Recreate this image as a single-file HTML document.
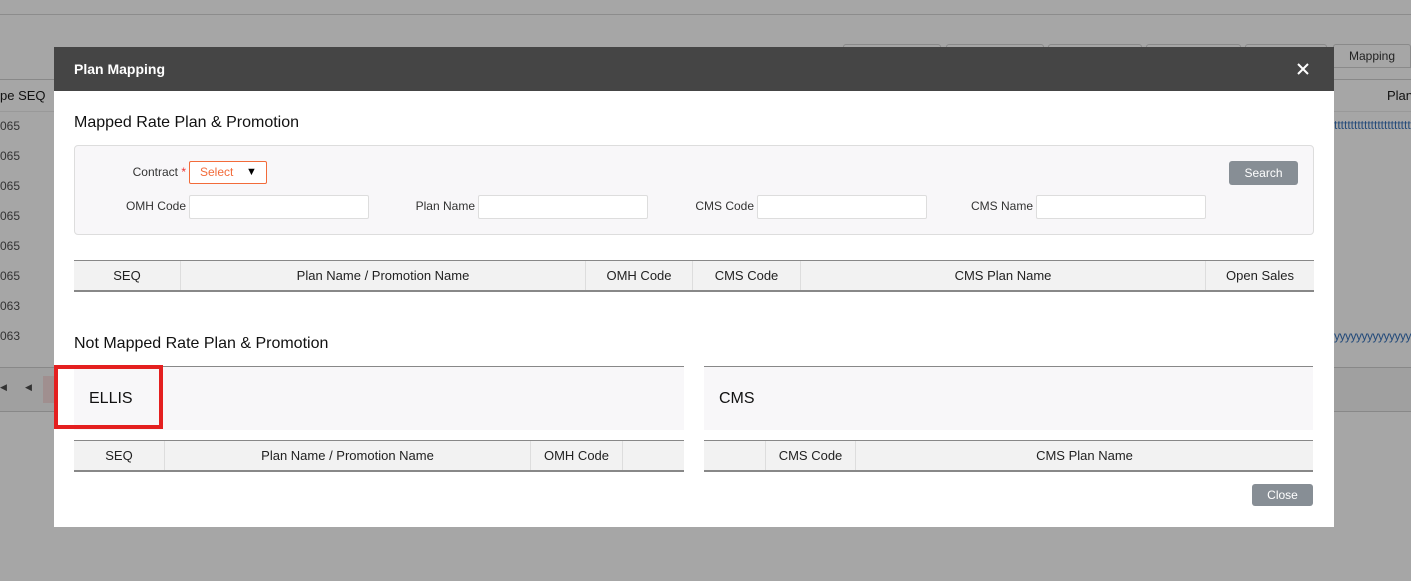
<!DOCTYPE html>
<html><head><style>
*{box-sizing:border-box;margin:0;padding:0}
body{width:1411px;height:581px;background:#a6a6a6;font-family:"Liberation Sans",sans-serif;position:relative;overflow:hidden;font-size:13px;color:#222}
.a{position:absolute}
.tab{position:absolute;top:44px;height:24px;border:1px solid #8a8a8a;border-radius:3px 3px 0 0;background:#a6a6a6;font-size:12px;text-align:center;line-height:22px;color:#222}
.bgrow{position:absolute;left:0;font-size:12px;color:#333}
.modal{position:absolute;left:54px;top:47px;width:1280px;height:480px;background:#fff}
.hd{position:absolute;left:0;top:0;width:1280px;height:44px;background:#454545;color:#fff;font-weight:bold;font-size:14px;line-height:44px;padding-left:20px}
h3{position:absolute;font-weight:normal;font-size:16px;color:#111}
.lbl{position:absolute;font-size:12px;color:#333;text-align:right}
.inp{position:absolute;height:24px;border:1px solid #ddd;background:#fff;border-radius:2px}
.th{position:absolute;height:32px;background:#f2f2f2;border-top:1px solid #888;border-bottom:2px solid #888;display:flex}
.th div{border-right:1px solid #ddd;text-align:center;line-height:29px;font-size:13px;color:#222}
.th div:last-child{border-right:none}
.btn{position:absolute;background:#878e95;color:#fff;font-size:12px;text-align:center;border-radius:3px}
</style></head><body>
<div class="a" style="left:0;top:14px;width:1411px;height:1px;background:#8c8c8c"></div>
<div class="tab" style="left:843px;width:98px"></div>
<div class="tab" style="left:946px;width:98px"></div>
<div class="tab" style="left:1048px;width:94px"></div>
<div class="tab" style="left:1146px;width:95px"></div>
<div class="tab" style="left:1245px;width:82px"></div>
<div class="tab" style="left:1333px;width:78px">Mapping</div>
<div class="a" style="left:0;top:79px;width:1411px;height:1px;background:#888"></div>
<div class="a" style="left:0;top:111px;width:1411px;height:1px;background:#999"></div>
<div class="bgrow" style="top:88px;font-size:13px;color:#111">pe SEQ</div>
<div class="bgrow" style="left:1387px;top:88px;font-size:13px;color:#111">Plan</div>
<div class="bgrow" style="top:119px">065</div>
<div class="bgrow" style="top:149px">065</div>
<div class="bgrow" style="top:179px">065</div>
<div class="bgrow" style="top:209px">065</div>
<div class="bgrow" style="top:239px">065</div>
<div class="bgrow" style="top:269px">065</div>
<div class="bgrow" style="top:299px">063</div>
<div class="bgrow" style="top:329px">063</div>
<div class="bgrow" style="left:1334px;top:118px;color:#234a7a;letter-spacing:0px">ttttttttttttttttttttttttt</div>
<div class="bgrow" style="left:1334px;top:329px;color:#234a7a;letter-spacing:-0.5px">yyyyyyyyyyyyyy</div>
<div class="a" style="left:0;top:367px;width:1411px;height:1px;background:#888"></div>
<div class="a" style="left:0;top:411px;width:1411px;height:1px;background:#888"></div>
<div class="a" style="left:0;top:368px;width:1411px;height:43px;background:#a0a0a0"></div>
<div class="a" style="left:0;top:382px;font-size:9px;color:#333">◀</div>
<div class="a" style="left:25px;top:382px;font-size:9px;color:#333">◀</div>
<div class="a" style="left:43px;top:376px;width:11px;height:27px;background:#a08f8f"></div>

<div class="modal">
<div class="hd">Plan Mapping<svg class="a" style="left:1243px;top:16px" width="12" height="12" viewBox="0 0 12 12"><path d="M1 1L11 11M11 1L1 11" stroke="#fff" stroke-width="2"/></svg></div>
<h3 style="left:20px;top:67px">Mapped Rate Plan &amp; Promotion</h3>
<div class="a" style="left:20px;top:98px;width:1240px;height:90px;background:#f8f7f9;border:1px solid #ddd;border-radius:4px"></div>
<div class="lbl" style="left:40px;top:118px;width:92px">Contract <span style="color:#e33">*</span></div>
<div class="a" style="left:135px;top:114px;width:78px;height:23px;border:1px solid #f26b3a;border-radius:2px;background:#fff;color:#f26b3a;font-size:12px;line-height:21px;padding-left:10px">Select<span class="a" style="left:56px;top:0;color:#000;font-size:11px">▼</span></div>
<div class="btn" style="left:1175px;top:114px;width:69px;height:24px;line-height:24px">Search</div>
<div class="lbl" style="left:40px;top:152px;width:92px">OMH Code</div>
<div class="inp" style="left:135px;top:148px;width:180px"></div>
<div class="lbl" style="left:320px;top:152px;width:101px">Plan Name</div>
<div class="inp" style="left:424px;top:148px;width:170px"></div>
<div class="lbl" style="left:600px;top:152px;width:100px">CMS Code</div>
<div class="inp" style="left:703px;top:148px;width:170px"></div>
<div class="lbl" style="left:880px;top:152px;width:99px">CMS Name</div>
<div class="inp" style="left:982px;top:148px;width:170px"></div>

<div class="th" style="left:20px;top:213px;width:1240px">
<div style="width:107px">SEQ</div><div style="width:405px">Plan Name / Promotion Name</div><div style="width:107px">OMH Code</div><div style="width:108px">CMS Code</div><div style="width:405px">CMS Plan Name</div><div style="width:108px">Open Sales</div>
</div>

<h3 style="left:20px;top:288px">Not Mapped Rate Plan &amp; Promotion</h3>
<div class="a" style="left:20px;top:319px;width:610px;height:64px;background:#f8f7f9;border-top:1px solid #888"></div>
<div class="a" style="left:35px;top:343px;font-size:16px;color:#111">ELLIS</div>
<div class="a" style="left:650px;top:319px;width:609px;height:64px;background:#f8f7f9;border-top:1px solid #888"></div>
<div class="a" style="left:665px;top:343px;font-size:16px;color:#111">CMS</div>
<div class="th" style="left:20px;top:393px;width:610px">
<div style="width:91px">SEQ</div><div style="width:366px">Plan Name / Promotion Name</div><div style="width:92px">OMH Code</div><div style="width:61px"></div>
</div>
<div class="th" style="left:650px;top:393px;width:609px">
<div style="width:62px"></div><div style="width:90px">CMS Code</div><div style="width:457px">CMS Plan Name</div>
</div>
<div class="btn" style="left:1198px;top:437px;width:61px;height:22px;line-height:22px">Close</div>
</div>
<div class="a" style="left:54px;top:365px;width:109px;height:64px;border:4px solid #e41f1f"></div>
</body></html>
